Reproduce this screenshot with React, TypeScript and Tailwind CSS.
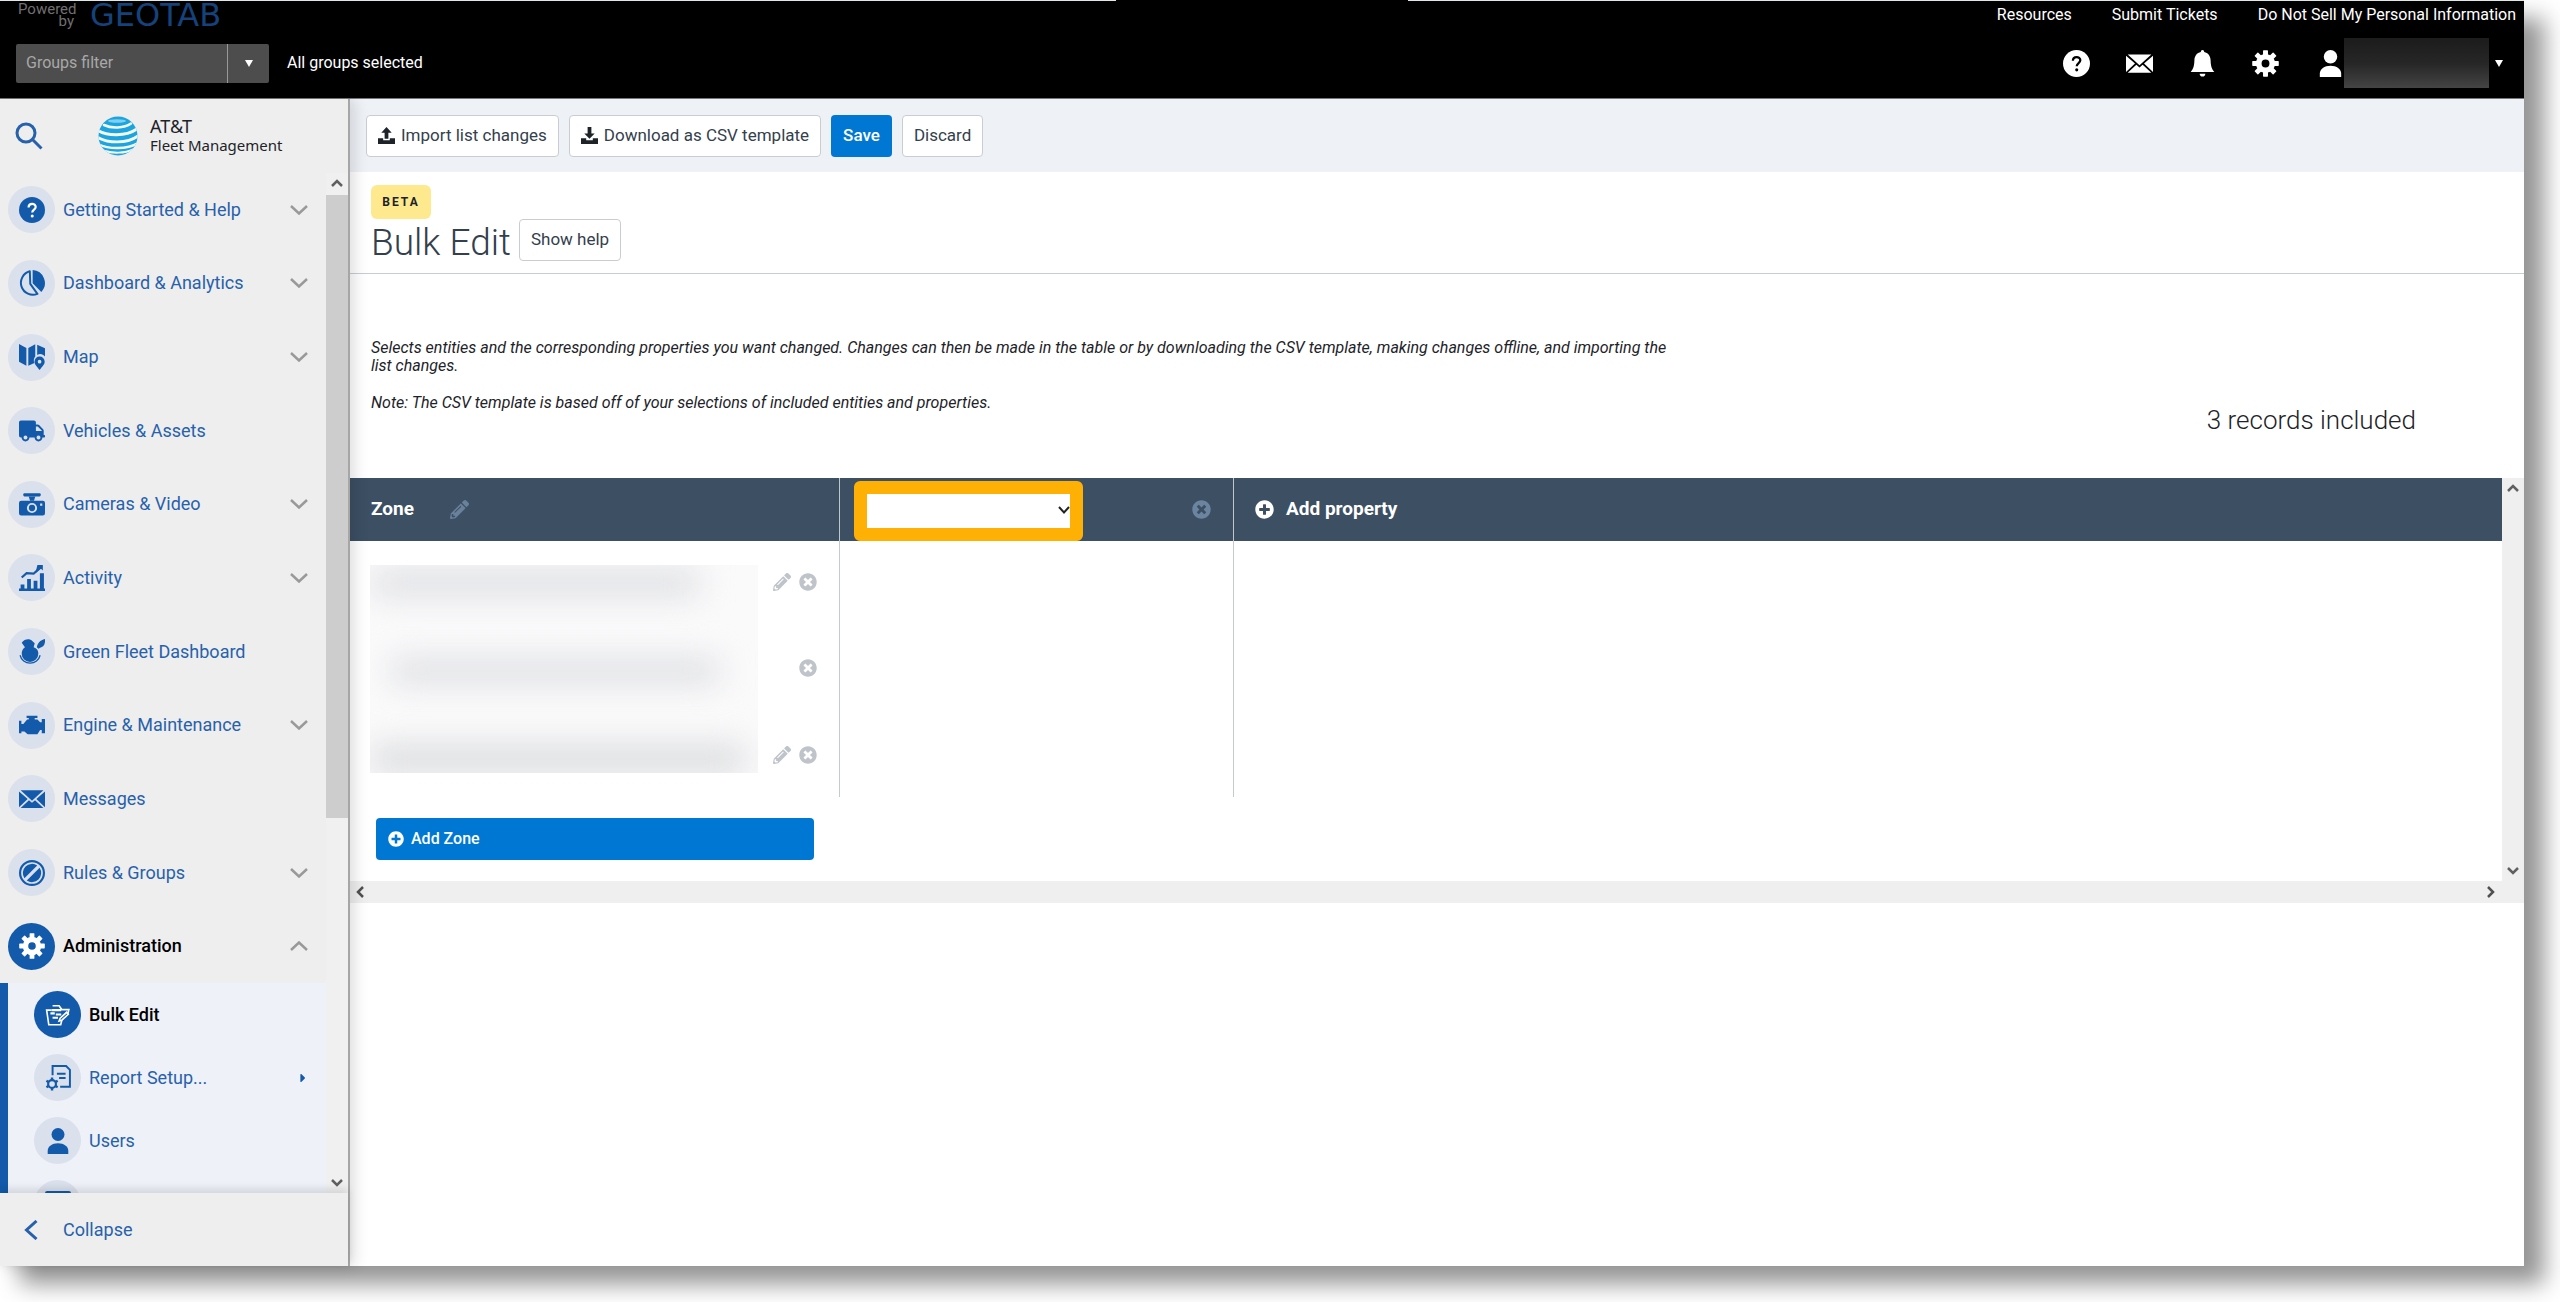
import type { ReactNode } from "react"
import { FaCaretRight, FaPencilAlt, FaPlusCircle, FaTimesCircle, FaTruck } from "react-icons/fa"

function GearIcon({ className }: { className?: string }) {
  const teeth = [0, 45, 90, 135, 180, 225, 270, 315]
  return (
    <svg viewBox="0 0 24 24" className={className} fill="currentColor">
      <circle cx="12" cy="12" r="6" fill="none" stroke="currentColor" strokeWidth="5" />
      {teeth.map((angle) => (
        <rect key={angle} x="9.8" y="0.2" width="4.4" height="5" rx="0.6" transform={`rotate(${angle} 12 12)`} />
      ))}
    </svg>
  )
}

function HelpIcon({ className, mark = "white" }: { className?: string; mark?: string }) {
  return (
    <svg viewBox="0 0 24 24" className={className}>
      <circle cx="12" cy="12" r="12" fill="currentColor" />
      <path d="M8.8 9.6c0-4.4 6.6-4.2 6.6-.4 0 2.4-3.2 2.5-3.2 5.2" fill="none" stroke={mark} strokeWidth="2" />
      <circle cx="12.2" cy="17.6" r="1.4" fill={mark} />
    </svg>
  )
}

function PieIcon({ className }: { className?: string }) {
  return (
    <svg viewBox="0 0 24 24" className={className}>
      <path d="M10 1.2A11 11 0 1 0 17 22L10.4 12.8z" fill="none" stroke="currentColor" strokeWidth="1.8" strokeLinejoin="round" />
      <path d="M12.6 0A12 12 0 0 1 20.6 20.2L12.6 12.2z" fill="currentColor" />
    </svg>
  )
}

function MapIcon({ className }: { className?: string }) {
  return (
    <svg viewBox="0 0 24 24" className={className} fill="currentColor">
      <path d="M0 0l6.8 3.6V20L0 16.4zM8.6 3.6L15 .2v11.4c-1.6 1.8-1.6 4.2-.8 6L8.6 20zM16.8.6L24 4v7.6c-1.8-2.4-5-3-7.2-1.4z" />
      <path
        fillRule="evenodd"
        d="M19 11.6a4.7 4.7 0 0 1 4.7 4.7c0 2.8-2.6 4.7-4.7 7.7-2.1-3-4.7-4.9-4.7-7.7a4.7 4.7 0 0 1 4.7-4.7zm0 3a1.7 1.7 0 1 0 0 3.4 1.7 1.7 0 0 0 0-3.4z"
      />
    </svg>
  )
}

function DashcamIcon({ className }: { className?: string }) {
  return (
    <svg viewBox="0 0 24 24" className={className} fill="currentColor">
      <rect x="4" y="2" width="16" height="3" rx="1" />
      <path d="M9 5h6l-1.2 4h-3.600z" />
      <path
        fillRule="evenodd"
        d="M2 9h20a2 2 0 0 1 2 2v9.5a2 2 0 0 1-2 2H2a2 2 0 0 1-2-2V11a2 2 0 0 1 2-2zm10 2a4.7 4.7 0 1 0 0 9.4 4.7 4.7 0 0 0 0-9.4zm7.5.5v2h2v-2z"
      />
      <circle cx="12" cy="15.7" r="2.9" />
    </svg>
  )
}

function ActivityIcon({ className }: { className?: string }) {
  return (
    <svg viewBox="0 0 24 24" className={className} fill="currentColor">
      <path d="M0 21.8h24V24H0zM1.5 18H5v4H1.5zM7.5 13H11v9H7.5zM13.500 14.500H17V22h-3.500zM19.300 7.500H23V22h-3.700zM17 0h5v5l-1.700-1.600L15 7.800z" />
      <path d="M2.500 11.500l4.500-4 6.500.5L20 1.800" fill="none" stroke="currentColor" strokeWidth="2" />
    </svg>
  )
}

function GreenIcon({ className }: { className?: string }) {
  return (
    <svg viewBox="0 0 24 24" className={className} fill="currentColor">
      <path d="M2.500 3.500C5-.5 10-.5 12 1.500L14.500 4l-1 3.500c3 1 4.500 3 4.300 6a7.500 7.500 0 0 1-15.300 0C2.500 11 3.500 9 5.500 7.500z" />
      <path d="M24 0c.5 5-1.500 7.500-4.500 8L18 9l-1.500-1.500C17 4 19.500 1 24 0z" />
      <path d="M1 15a9.500 9.500 0 0 0 18.500 0" fill="none" stroke="currentColor" strokeWidth="1.200" />
    </svg>
  )
}

function EngineIcon({ className }: { className?: string }) {
  return (
    <svg viewBox="0 0 24 24" className={className} fill="currentColor">
      <path d="M7 3.500h10v2h-2.500V7H17l2.500 2.500H21V6.500h3v13h-3v-3h-1.500l-2.500 4H8l-3-2.500H2.200v1.500H0V8h2.200v3H4l3.500-4H9V5.500H7z" />
    </svg>
  )
}

function MailIcon({ className }: { className?: string }) {
  return (
    <svg viewBox="0 0 24 24" className={className} fill="currentColor">
      <path d="M1.500 4h21L12 13.500zM0 5l8 7-8 7.500zM24 5v14.500L16 12zM9.200 13.200L12 15.500l2.800-2.300 7.700 7h-21z" />
    </svg>
  )
}

function RulesIcon({ className }: { className?: string }) {
  return (
    <svg viewBox="0 0 24 24" className={className} fill="currentColor">
      <circle cx="12" cy="12" r="11" fill="none" stroke="currentColor" strokeWidth="2" />
      <path d="M16.800 5A8.500 8.500 0 0 0 5 16.800zM19 7.200A8.500 8.500 0 0 1 7.200 19z" />
    </svg>
  )
}

function BulkEditIcon({ className }: { className?: string }) {
  return (
    <svg viewBox="0 0 24 24" className={className} fill="none" stroke="currentColor" strokeWidth="1.500">
      <path d="M6 7.500H1.500l2 13.500h11l1-4M7 3.500h6l2.500 3.500H22l-1 4.500" />
      <path d="M6 7.500h9M5 10.500h4M10 11.500h5M7 14.500h5" strokeWidth="2" />
      <path d="M13 17.500l1-2.500 6-5.500 1.500 1.800-6 5.500z" />
    </svg>
  )
}

function ReportIcon({ className }: { className?: string }) {
  return (
    <svg viewBox="0 0 24 24" className={className} fill="none" stroke="currentColor" strokeWidth="1.800">
      <path d="M7 9.500V1h12.500L23 4.500V20H14M11 8h8M13 12h6" />
      <circle cx="6.500" cy="17.500" r="3.600" strokeWidth="2" />
      <path d="M6.500 11.500V14M6.500 21v2.500M1.300 14.500l2.200 1.300M9.500 19.200l2.200 1.300M1.300 20.500l2.200-1.300M9.500 15.800l2.200-1.300" strokeWidth="2.200" />
    </svg>
  )
}

function UserIcon({ className }: { className?: string }) {
  return (
    <svg viewBox="0 0 24 24" className={className} fill="currentColor">
      <circle cx="12" cy="6" r="6" />
      <path d="M2.500 24v-3c0-4 4-7 9.500-7s9.500 3 9.500 7v3z" />
    </svg>
  )
}

function BellIcon({ className }: { className?: string }) {
  return (
    <svg viewBox="0 0 24 24" className={className} fill="currentColor">
      <path d="M12 0c1 0 1.500.7 1.500 1.700C17 2.500 19 5 19.200 9c.2 5 .8 7.500 3.300 10.500h-21C4 16.500 4.600 14 4.800 9 5 5 7 2.500 10.500 1.700 10.500.7 11 0 12 0zM9.500 21h5a2.500 2.500 0 0 1-5 0z" />
    </svg>
  )
}

function ScreenIcon({ className }: { className?: string }) {
  return (
    <svg viewBox="0 0 24 24" className={className} fill="currentColor">
      <rect x="0" y="0" width="24" height="20" rx="2" />
    </svg>
  )
}

function TrayIcon({ up }: { up?: boolean }) {
  return (
    <svg viewBox="0 0 18 18" className="size-[17px] text-[#1d2329]" fill="currentColor">
      <path d={up ? "M9 0l5.500 6H11v6.500H7V6H3.500z" : "M9 12.500L3.500 7H7V0h4v7h3.500z"} />
      <path d="M0 12h5.500v2h7v-2H18v6H0z" />
    </svg>
  )
}

function Chevron({ className }: { className?: string }) {
  return (
    <svg viewBox="0 0 18 10" className={className} fill="none" stroke="currentColor" strokeWidth="2.500">
      <path d="M1 1l8 7.500L17 1" />
    </svg>
  )
}

function ScrollArrow({ className }: { className?: string }) {
  return (
    <svg viewBox="0 0 12 8" className={className} fill="none" stroke="currentColor" strokeWidth="2.500">
      <path d="M1 1l5 5 5-5" />
    </svg>
  )
}

function Globe() {
  return (
    <svg viewBox="0 0 40 40" className="size-10 shrink-0">
      <defs>
        <clipPath id="globe">
          <circle cx="20" cy="20" r="19.500" />
        </clipPath>
      </defs>
      <g clipPath="url(#globe)">
        <rect width="40" height="40" fill="#1ba4de" />
        <g fill="none" stroke="#f4fafc" strokeLinecap="round">
          <path d="M6 9c7 3.500 20 3.500 27-1.500" strokeWidth="2.600" />
          <path d="M0 14.500c9 5.500 28 6 38-1" strokeWidth="3" />
          <path d="M-1 21c11 6.500 30 7 41-1" strokeWidth="2.800" />
          <path d="M0 28c11 5.500 29 5.500 40-1" strokeWidth="2.400" />
          <path d="M5 34.500c9 3 22 3 30-1" strokeWidth="2" />
        </g>
        <ellipse cx="19" cy="5" rx="9" ry="1.800" fill="#7fd0f0" />
      </g>
    </svg>
  )
}

const navItems = [
  { label: "Getting Started & Help", icon: <HelpIcon className="size-[26px]" />, expandable: true },
  { label: "Dashboard & Analytics", icon: <PieIcon className="size-[26px]" />, expandable: true },
  { label: "Map", icon: <MapIcon className="size-[26px]" />, expandable: true },
  { label: "Vehicles & Assets", icon: <FaTruck className="size-[26px]" />, expandable: false },
  { label: "Cameras & Video", icon: <DashcamIcon className="size-[26px]" />, expandable: true },
  { label: "Activity", icon: <ActivityIcon className="size-[26px]" />, expandable: true },
  { label: "Green Fleet Dashboard", icon: <GreenIcon className="size-[26px]" />, expandable: false },
  { label: "Engine & Maintenance", icon: <EngineIcon className="size-[26px]" />, expandable: true },
  { label: "Messages", icon: <MailIcon className="size-[26px]" />, expandable: false },
  { label: "Rules & Groups", icon: <RulesIcon className="size-[26px]" />, expandable: true },
]

const adminItems = [
  { label: "Bulk Edit", icon: <BulkEditIcon className="size-[26px]" />, active: true, more: false },
  { label: "Report Setup...", icon: <ReportIcon className="size-[26px]" />, active: false, more: true },
  { label: "Users", icon: <UserIcon className="size-[26px]" />, active: false, more: false },
  { label: "", icon: <ScreenIcon className="size-[26px]" />, active: false, more: false },
]

function Bubble({ active, children }: { active?: boolean; children: ReactNode }) {
  return (
    <span
      className={
        active
          ? "flex size-[47px] shrink-0 items-center justify-center rounded-full bg-[#135aab] text-white"
          : "flex size-[47px] shrink-0 items-center justify-center rounded-full bg-[#dae0ec] text-[#135aab]"
      }
    >
      {children}
    </span>
  )
}

function Header() {
  return (
    <header className="flex h-[99px] shrink-0 flex-col border-b border-[#777] bg-black text-base text-white">
      <div className="flex h-px">
        <div className="flex-1 bg-[#dfe8e6]" />
        <div className="w-[292px]" />
        <div className="flex-1 bg-[#dfe8e6]" />
      </div>
      <div className="flex h-[27px] items-center justify-between pr-2 pl-[18px]">
        <div className="flex items-center gap-4">
          <p className="w-14 text-right text-[15px] leading-3 text-[#707070]">Powered by</p>
          <span className="font-['DejaVu_Sans',sans-serif] text-[32px] leading-7 text-[#15427a]">GEOTAB</span>
        </div>
        <nav className="flex gap-10">
          <a href="#resources">Resources</a>
          <a href="#tickets">Submit Tickets</a>
          <a href="#privacy">Do Not Sell My Personal Information</a>
        </nav>
      </div>
      <div className="flex flex-1 items-center pr-[21px] pl-4">
        <div className="flex h-[39px] w-[253px] overflow-hidden rounded-xs bg-[#4d4d4d]">
          <input
            type="text"
            aria-label="Groups filter"
            placeholder="Groups filter"
            className="min-w-0 flex-1 bg-transparent px-2.5 placeholder:text-[#a8a8a8]"
          />
          <button aria-label="Choose groups" className="flex w-[42px] items-center justify-center border-l border-[#999]">
            <svg viewBox="0 0 8 7" className="h-[7px] w-2 fill-white">
              <path d="M0 0h8L4 7z" />
            </svg>
          </button>
        </div>
        <span className="ml-[18px]">All groups selected</span>
        <div className="ml-auto flex items-center gap-9">
          <button aria-label="Help">
            <HelpIcon className="size-[27px]" mark="black" />
          </button>
          <button aria-label="Mail">
            <MailIcon className="size-[27px]" />
          </button>
          <button aria-label="Notifications">
            <BellIcon className="size-[27px]" />
          </button>
          <button aria-label="Settings">
            <GearIcon className="size-[27px]" />
          </button>
          <button aria-label="Account" className="ml-0.5 flex items-center">
            <UserIcon className="size-[27px]" />
            <span className="h-[50px] w-[145px] bg-linear-to-b from-[#1c1c1c] via-[#262626] to-[#444]" />
            <svg viewBox="0 0 8 7" className="ml-1.5 h-[7px] w-2 fill-white">
              <path d="M0 0h8L4 7z" />
            </svg>
          </button>
        </div>
      </div>
    </header>
  )
}

function Sidebar() {
  return (
    <aside className="relative z-10 flex w-[350px] shrink-0 flex-col border-r-2 border-[#a6a6a6] bg-[#eee] text-lg text-[#2761ab] shadow-[4px_0_14px_rgba(0,0,0,0.14)]">
      <div className="flex h-[74px] shrink-0 items-center pl-[15px]">
        <button aria-label="Search">
          <svg viewBox="0 0 28 28" className="size-7" fill="none" stroke="currentColor" strokeWidth="3">
            <circle cx="11" cy="11" r="9" />
            <path d="M17.500 17.500L26.500 26.500" />
          </svg>
        </button>
        <div className="flex flex-1 items-center gap-3 pl-[55px]">
          <Globe />
          <div className="font-['Noto_Sans',sans-serif] text-[15px] leading-[19px] text-[#1d2329]">
            <p className="text-lg leading-[19px]">AT&amp;T</p>
            <p>Fleet Management</p>
          </div>
        </div>
      </div>

      <div className="flex min-h-0 flex-1">
        <nav className="min-w-0 flex-1 overflow-hidden">
          <ul className="grid h-[810px] auto-rows-fr">
            {navItems.map((item) => (
              <li key={item.label} className="grid">
                <a href="#nav" className="flex items-center pr-[18px] pl-2">
                  <Bubble>{item.icon}</Bubble>
                  <span className="flex-1 pl-2">{item.label}</span>
                  {item.expandable && <Chevron className="h-[10px] w-[18px] text-[#999]" />}
                </a>
              </li>
            ))}
            <li className="grid">
              <a href="#nav" className="flex items-center pr-[18px] pl-2 font-medium text-black">
                <Bubble active>
                  <GearIcon className="size-[26px]" />
                </Bubble>
                <span className="flex-1 pl-2">Administration</span>
                <Chevron className="h-[10px] w-[18px] rotate-180 text-[#999]" />
              </a>
            </li>
          </ul>
          <ul className="border-l-8 border-[#135aab] bg-[#eef1f8]">
            {adminItems.map((item) => (
              <li key={item.label}>
                <a
                  href="#nav"
                  className={
                    item.active
                      ? "flex h-[63px] items-center pr-4 pl-[26px] font-medium text-black"
                      : "flex h-[63px] items-center pr-4 pl-[26px]"
                  }
                >
                  <Bubble active={item.active}>{item.icon}</Bubble>
                  <span className="flex-1 pl-2">{item.label}</span>
                  {item.more && <FaCaretRight className="size-3.5 text-[#135aab]" />}
                </a>
              </li>
            ))}
          </ul>
        </nav>
        <div className="flex w-[22px] flex-col items-center bg-[#f0f0f0] py-1.5 text-[#606060]">
          <ScrollArrow className="h-2 w-3 rotate-180" />
          <div className="mt-2 h-[623px] w-full bg-[#cdcdcd]" />
          <ScrollArrow className="mt-auto h-2 w-3" />
        </div>
      </div>

      <button className="relative flex h-[73px] shrink-0 items-center bg-[#eee] pl-6 shadow-[0_-4px_8px_rgba(0,0,0,0.12)]">
        <svg viewBox="0 0 14 20" className="h-5 w-3.5" fill="none" stroke="currentColor" strokeWidth="3">
          <path d="M12.500 1L2.500 10l10 9" />
        </svg>
        <span className="pl-[25px]">Collapse</span>
      </button>
    </aside>
  )
}

const outlineButton =
  "flex h-[42px] items-center gap-1.5 rounded-sm border border-[#c9cdd3] bg-white px-[11px] text-[17px] text-[#33404d]"

const zones = [
  { id: 1, editable: true, height: "h-[82px]" },
  { id: 2, editable: false, height: "h-[90px]" },
  { id: 3, editable: true, height: "h-[84px]" },
]

function ZoneTable() {
  return (
    <div className="flex flex-col">
      <div className="flex">
        <div className="min-w-0 flex-1">
          <table className="w-full table-fixed border-separate border-spacing-0">
            <colgroup>
              <col className="w-[408px]" />
              <col className="w-[82px]" />
              <col className="w-[394px]" />
              <col />
            </colgroup>
            <thead className="bg-[#3c4f63] text-left text-[19px] text-white">
              <tr className="h-[63px]">
                <th colSpan={2} className="border-r border-[#c0c6cc] py-0 pl-[21px]">
                  <div className="flex items-center gap-9">
                    Zone
                    <button aria-label="Edit zone" className="text-[#69819b]">
                      <FaPencilAlt className="size-[19px]" />
                    </button>
                  </div>
                </th>
                <th className="border-r border-[#c0c6cc] p-0">
                  <div className="flex items-center justify-between pr-[22px] pl-3.5">
                    <div className="relative mt-[3px] rounded-md border-[13px] border-[#ffb005]">
                      <select aria-label="Property" className="block h-[34px] w-[203px] appearance-none bg-white text-black" />
                      <svg viewBox="0 0 12 8" className="pointer-events-none absolute top-3 right-0 h-2 w-3" fill="none" stroke="#222" strokeWidth="2">
                        <path d="M1 1l5 5.500L11 1" />
                      </svg>
                    </div>
                    <button aria-label="Remove property" className="text-[#6b849f]">
                      <FaTimesCircle className="size-[19px]" />
                    </button>
                  </div>
                </th>
                <th className="py-0 pl-[21px]">
                  <button className="flex items-center gap-3">
                    <FaPlusCircle className="size-[19px]" />
                    Add property
                  </button>
                </th>
              </tr>
            </thead>
            <tbody>
              {zones.map((zone, index) => (
                <tr key={zone.id} className={zone.height}>
                  {index === 0 && (
                    <td rowSpan={3} className="py-0 pr-0 pl-5">
                      {/* hidden zone names */}
                      <div className="flex h-[208px] flex-col justify-between overflow-hidden bg-[#fafafb] pt-1">
                        <div className="h-7 w-[330px] rounded-md bg-[#dfe0e3] blur-lg" />
                        <div className="ml-5 h-6 w-[330px] rounded-md bg-[#dcdde1] blur-lg" />
                        <div className="h-7 w-[376px] rounded-md bg-[#dadbdd] blur-lg" />
                      </div>
                    </td>
                  )}
                  <td className="border-r border-[#c6c9cd] p-0">
                    <div className="flex justify-end gap-2 pr-[22px] text-[#bfc4cb]">
                      {zone.editable && (
                        <button aria-label="Edit">
                          <FaPencilAlt className="size-[18px]" />
                        </button>
                      )}
                      <button aria-label="Remove">
                        <FaTimesCircle className="size-[18px]" />
                      </button>
                    </div>
                  </td>
                  <td className="border-r border-[#c6c9cd]" />
                  <td />
                </tr>
              ))}
            </tbody>
          </table>
          <div className="px-[26px] pt-[21px] pb-[21px]">
            <button className="flex h-[42px] w-[438px] items-center gap-[7px] rounded-sm bg-[#0078d3] px-3 font-medium text-white">
              <FaPlusCircle className="size-4" />
              Add Zone
            </button>
          </div>
        </div>
        <div className="flex w-[22px] flex-col items-center justify-between bg-[#efefef] py-1.5 text-[#606060]">
          <ScrollArrow className="h-2 w-3 rotate-180" />
          <ScrollArrow className="h-2 w-3" />
        </div>
      </div>
      <div className="flex h-[22px] items-center justify-between bg-[#efefef] pr-[27px] pl-1 text-[#505050]">
        <ScrollArrow className="h-2 w-3 rotate-90" />
        <ScrollArrow className="h-2 w-3 -rotate-90" />
      </div>
    </div>
  )
}

export default function App() {
  return (
    <div className="h-screen overflow-hidden bg-white pr-9 pb-9 font-['Roboto',sans-serif]">
      <div className="flex h-full flex-col bg-white shadow-[20px_18px_22px_rgba(0,0,0,0.42)]">
        <Header />
        <div className="flex min-h-0 flex-1">
          <Sidebar />
          <main className="min-w-0 flex-1 bg-white text-base text-[#1d2329]">
            <div className="flex h-[73px] items-center gap-2.5 bg-[#eef1f6] pl-4">
              <button className={outlineButton}>
                <TrayIcon up />
                Import list changes
              </button>
              <button className={outlineButton}>
                <TrayIcon />
                Download as CSV template
              </button>
              <button className="h-[42px] rounded-sm bg-[#0078d3] px-3 text-[17px] font-medium text-white">Save</button>
              <button className={outlineButton}>Discard</button>
            </div>

            <div className="border-b border-[#c9cdd3] pt-[13px] pb-3 pl-[21px]">
              <span className="flex h-[34px] w-[60px] items-center justify-center rounded-md bg-[#fee98e] text-xs font-bold tracking-[2px]">
                BETA
              </span>
              <div className="flex items-end gap-2">
                <h1 className="text-[37px] leading-9 font-light text-[#33404d]">Bulk Edit</h1>
                <button className={outlineButton}>Show help</button>
              </div>
            </div>

            <div className="flex justify-between pt-[65px] pr-[108px] pl-[21px]">
              <div className="max-w-[1300px] text-base leading-[18px] italic">
                <p>
                  Selects entities and the corresponding properties you want changed. Changes can then be made in the table or by
                  downloading the CSV template, making changes offline, and importing the list changes.
                </p>
                <p className="mt-[19px] mb-[66px]">Note: The CSV template is based off of your selections of included entities and properties.</p>
              </div>
              <p className="self-end pb-[42px] text-[26px] leading-8 font-light">3 records included</p>
            </div>

            <ZoneTable />
          </main>
        </div>
      </div>
    </div>
  )
}
